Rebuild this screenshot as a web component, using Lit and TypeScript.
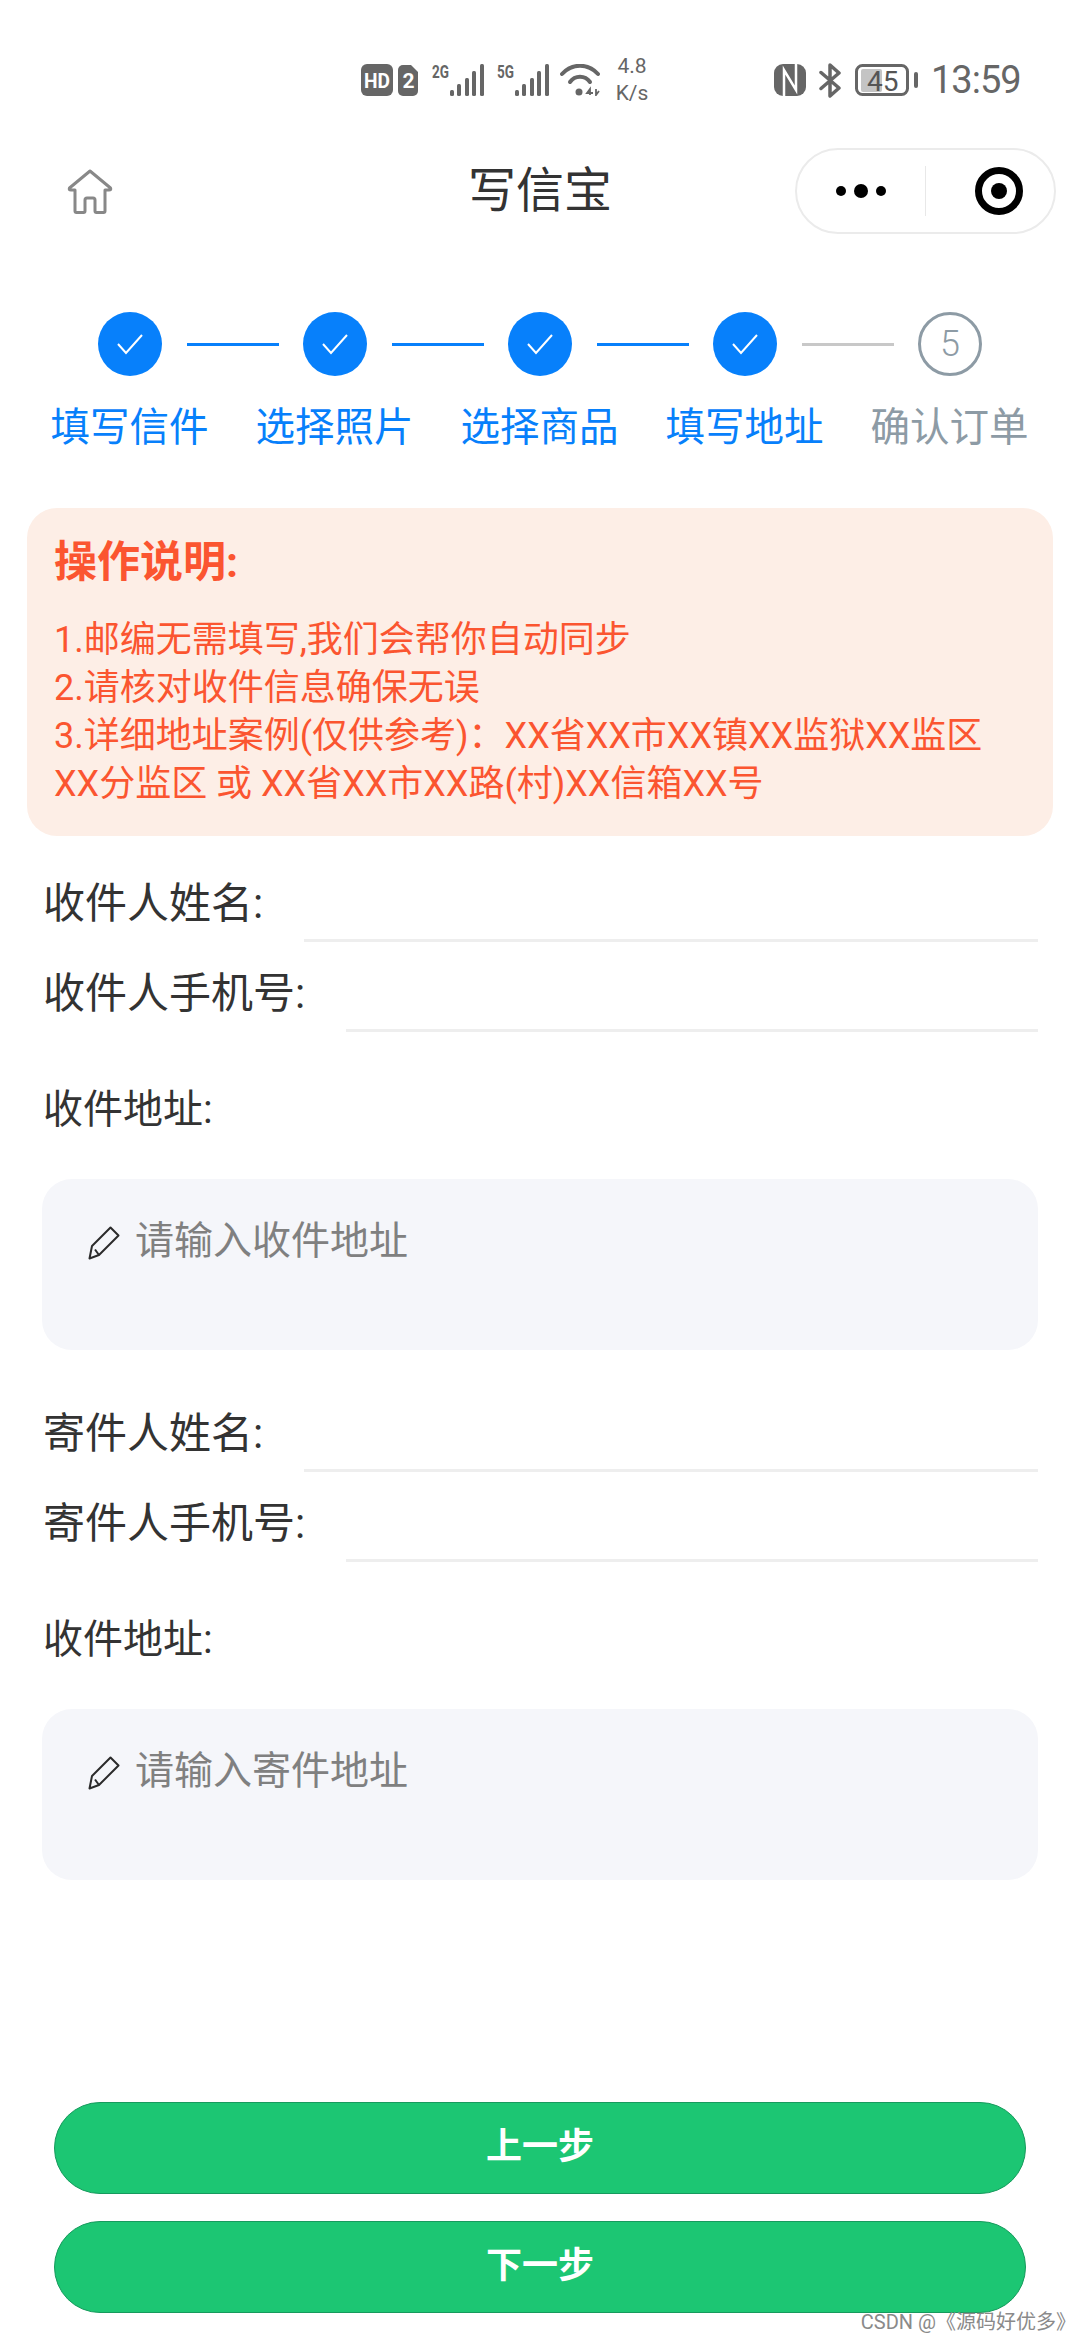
import { LitElement, css, html, svg } from 'lit';
import { customElement } from 'lit/decorators.js';

const stepLabels = ['填写信件', '选择照片', '选择商品', '填写地址', '确认订单'];

const noticeLines = [
  '1.邮编无需填写,我们会帮你自动同步',
  '2.请核对收件信息确保无误',
  '3.详细地址案例(仅供参考)：XX省XX市XX镇XX监狱XX监区',
  'XX分监区 或 XX省XX市XX路(村)XX信箱XX号'
];

const signalIcon = (label: string) => html`
  <svg class="signal" width="53" height="32" viewBox="0 0 53 32">
    <text x="0" y="14" class="sig-text" textLength="17" lengthAdjust="spacingAndGlyphs">${label}</text>
    ${[
      [20, 6],
      [27, 12],
      [35, 18],
      [42, 25],
      [50, 32]
    ].map(([x, h]) => svg`<rect x=${x - 2} y=${32 - h} width="4" height=${h} rx="1.500" fill="#666"></rect>`)}
  </svg>
`;

const pencilIcon = html`
  <svg class="pencil" width="32" height="34" viewBox="0 0 32 34" fill="none" stroke="#2b2b2b" stroke-width="2">
    <path d="M22.500 1.500 L30.500 9.500 L11 29 L1.500 32.500 L4 20 Z" stroke-linejoin="round"></path>
    <path d="M7 23.500 L11 29"></path>
  </svg>
`;

@customElement('app-root')
export class AppRoot extends LitElement {
  public static override styles = css`
    :host {
      display: block;
      font-family: Roboto, 'Noto Sans CJK SC', sans-serif;
    }

    .page {
      position: relative;
      display: flex;
      flex-direction: column;
      height: 2340px;
      background: #fff;
      color: #333;
      overflow: hidden;
    }

    .status {
      display: flex;
      align-items: center;
      height: 148px;
      box-sizing: border-box;
      padding: 12px 0 0 361px;
      color: #666;
    }

    .status svg {
      display: block;
      flex: none;
    }

    .sig-text {
      font: 700 18px Roboto, sans-serif;
      fill: #666;
    }

    .badge-text {
      font: 700 21px Roboto, sans-serif;
      fill: #fff;
    }

    .signal {
      margin-right: 12px;
    }

    .speed {
      width: 36px;
      margin-left: 14px;
      font-size: 21px;
      line-height: 27px;
      text-align: center;
    }

    .time {
      margin-left: 13px;
      font-size: 38px;
      letter-spacing: -1px;
    }

    .nav {
      display: grid;
      grid-template-columns: minmax(0, 1fr) auto minmax(0, 1fr);
      align-items: center;
      height: 86px;
      padding: 0 24px;
    }

    .home {
      display: block;
      margin-left: 43px;
    }

    .title {
      font-size: 48px;
      line-height: 86px;
    }

    .capsule {
      justify-self: end;
      display: flex;
      align-items: center;
      box-sizing: border-box;
      width: 261px;
      height: 86px;
      border: 2px solid #ebebeb;
      border-radius: 43px;
      padding-left: 39px;
    }

    .dots {
      display: flex;
      align-items: center;
      gap: 8px;
    }

    .dots i {
      display: block;
      width: 10px;
      height: 10px;
      border-radius: 50%;
      background: #000;
    }

    .dots i:nth-child(2) {
      width: 14px;
      height: 14px;
    }

    .divider {
      width: 1px;
      height: 50px;
      margin-left: 39px;
      background: #e8e8e8;
    }

    .record {
      display: flex;
      align-items: center;
      justify-content: center;
      box-sizing: border-box;
      width: 48px;
      height: 48px;
      margin-left: 49px;
      border: 7px solid #000;
      border-radius: 50%;
    }

    .record i {
      display: block;
      width: 16px;
      height: 16px;
      border-radius: 50%;
      background: #000;
    }

    .track {
      display: flex;
      align-items: center;
      margin-top: 78px;
      padding-left: 98px;
    }

    .dot {
      flex: none;
      display: flex;
      align-items: center;
      justify-content: center;
      box-sizing: border-box;
      width: 64px;
      height: 64px;
      border-radius: 50%;
      background: #0780fb;
    }

    .dot.todo {
      border: 3px solid #8d9ba5;
      background: #fff;
      color: #8d9ba5;
      font-size: 36px;
      font-weight: 300;
    }

    .line {
      flex: none;
      width: 92px;
      height: 3px;
      margin: 0 24px 0 25px;
      background: #0780fb;
    }

    .line.todo {
      background: #c8c8c8;
    }

    .labels {
      display: grid;
      grid-template-columns: repeat(5, 205px);
      margin-top: 24px;
      padding-left: 27px;
      font-size: 39.5px;
      line-height: 56px;
      text-align: center;
      color: #0780fb;
    }

    .labels .todo {
      color: #8d9ba5;
    }

    .notice {
      box-sizing: border-box;
      height: 328px;
      margin: 52px 27px 0;
      padding: 27px 27px 0;
      border-radius: 30px;
      background: #fdeee6;
      color: #fb5530;
    }

    .notice h2 {
      margin: 0;
      font-size: 43px;
      line-height: 54px;
      font-weight: 700;
    }

    .notice p {
      margin: 27px 0 0;
      font-size: 36px;
      line-height: 48px;
      white-space: nowrap;
    }

    .form {
      padding: 0 42px;
    }

    .field {
      display: flex;
      height: 67px;
      padding-left: 1px;
      font-size: 42px;
      line-height: 58px;
      white-space: nowrap;
    }

    .field.top {
      margin-top: 39px;
    }

    .field.top.later {
      margin-top: 55px;
    }

    .field.second {
      margin-top: 23px;
    }

    .field span {
      padding-right: 41px;
    }

    .field .input {
      flex: 1;
      border-bottom: 3px solid #eee;
    }

    .area-label {
      margin-top: 49px;
      padding-left: 1px;
      font-size: 40px;
      line-height: 58px;
    }

    .area {
      display: flex;
      align-items: flex-start;
      box-sizing: border-box;
      height: 171px;
      margin-top: 40px;
      padding: 34px 0 0 46px;
      border-radius: 30px;
      background: #f5f6fa;
      color: #808080;
      font-size: 39px;
      line-height: 56px;
    }

    .pencil {
      flex: none;
      margin: 13px 15px 0 0;
    }

    .actions {
      display: flex;
      flex-direction: column;
      gap: 27px;
      margin-top: auto;
      padding: 0 54px 27px;
    }

    .btn {
      box-sizing: border-box;
      height: 92px;
      border: 1px solid #179a5d;
      border-radius: 46px;
      background: #1cc673;
      color: #fff;
      font-size: 36px;
      font-weight: 700;
      line-height: 88px;
      text-align: center;
    }

    .mark {
      position: absolute;
      right: 4px;
      bottom: 5px;
      font-size: 20px;
      line-height: 26px;
      color: #8a8a8a;
    }
  `;

  private renderStatus() {
    return html`
      <div class="status">
        <svg width="57" height="32" viewBox="0 0 57 32" style="margin-right:14px">
          <rect width="32" height="32" rx="6" fill="#666"></rect>
          <text x="3" y="23.500" class="badge-text" textLength="26" lengthAdjust="spacingAndGlyphs">HD</text>
          <path d="M37 6 a5 5 0 0 1 5 -5 H50 l7 7 V27 a5 5 0 0 1 -5 5 H42 a5 5 0 0 1 -5 -5 Z" fill="#666"></path>
          <text x="41.500" y="24" class="badge-text">2</text>
        </svg>
        ${signalIcon('2G')} ${signalIcon('5G')}
        <svg width="40" height="32" viewBox="0 0 40 32" fill="none" stroke="#666" stroke-width="4" stroke-linecap="round" style="margin-left:-2px">
          <path d="M2 10 C12 -1 28 -1 38 10"></path>
          <path d="M10 18 C15 11 25 11 30 18"></path>
          <circle cx="19" cy="28" r="3.500" fill="#666" stroke="none"></circle>
          <path d="M30 31 V25 L27 29 H33 M36 25 V31 L39 27" stroke-width="1.800" stroke-linecap="butt"></path>
        </svg>
        <div class="speed">4.8<br />K/s</div>
        <svg width="32" height="32" viewBox="0 0 32 32" style="margin-left:124px">
          <rect width="32" height="32" rx="9" fill="#666"></rect>
          <path d="M10 32 V6 L22 26 V0" fill="none" stroke="#fff" stroke-width="2.500"></path>
        </svg>
        <svg width="22" height="35" viewBox="0 0 22 35" fill="none" stroke="#666" stroke-width="3.500" stroke-linecap="round" stroke-linejoin="round" style="margin-left:13px">
          <path d="M2 9.500 L20 25 L11 33 V2 L20 10 L2 25.500"></path>
        </svg>
        <svg width="63" height="32" viewBox="0 0 63 32" style="margin-left:14px">
          <rect x="1.500" y="1.500" width="51" height="29" rx="6" fill="none" stroke="#666" stroke-width="3"></rect>
          <rect x="6" y="5" width="21" height="23" rx="2" fill="#c4c4c4"></rect>
          <text x="12" y="27" style="font:28px Roboto,sans-serif;fill:#555">45</text>
          <rect x="59" y="8" width="4" height="16" rx="2" fill="#666"></rect>
        </svg>
        <div class="time">13:59</div>
      </div>
    `;
  }

  private renderNav() {
    return html`
      <div class="nav">
        <svg class="home" width="46" height="45" viewBox="0 0 46 45" fill="none" stroke="#888" stroke-width="3" stroke-linejoin="round">
          <path d="M23 2 L43.500 19 Q44.500 21 42 21 H38 V42 Q38 43.500 36.500 43.500 H29.500 Q28 43.500 28 42 V31 Q28 29 26 29 H20 Q18 29 18 31 V42 Q18 43.500 16.500 43.500 H9.500 Q8 43.500 8 42 V21 H4 Q1.500 21 2.500 19 Z"></path>
        </svg>
        <div class="title">写信宝</div>
        <div class="capsule">
          <div class="dots"><i></i><i></i><i></i></div>
          <div class="divider"></div>
          <div class="record"><i></i></div>
        </div>
      </div>
    `;
  }

  private renderSteps() {
    return html`
      <div class="track">
        ${stepLabels.map((_, index) =>
          index < 4
            ? html`
                <div class="dot">
                  <svg width="28" height="22" viewBox="0 0 28 22" fill="none" stroke="#fff" stroke-width="2">
                    <path d="M2 11 L10 20 L26 2"></path>
                  </svg>
                </div>
                <div class="line ${index === 3 ? 'todo' : ''}"></div>
              `
            : html`<div class="dot todo">5</div>`
        )}
      </div>
      <div class="labels">
        ${stepLabels.map((label, index) => html`<div class=${index === 4 ? 'todo' : ''}>${label}</div>`)}
      </div>
    `;
  }

  private renderContact(prefix: string, placeholder: string, later: boolean) {
    return html`
      <div class="field top ${later ? 'later' : ''}">
        <span>${prefix}人姓名:</span>
        <div class="input"></div>
      </div>
      <div class="field second">
        <span>${prefix}人手机号:</span>
        <div class="input"></div>
      </div>
      <div class="area-label">收件地址:</div>
      <div class="area">${pencilIcon}<span>${placeholder}</span></div>
    `;
  }

  public override render() {
    return html`
      <div class="page">
        ${this.renderStatus()} ${this.renderNav()} ${this.renderSteps()}
        <div class="notice">
          <h2>操作说明:</h2>
          <p>${noticeLines.map((line) => html`${line}<br />`)}</p>
        </div>
        <div class="form">
          ${this.renderContact('收件', '请输入收件地址', false)} ${this.renderContact('寄件', '请输入寄件地址', true)}
        </div>
        <div class="actions">
          <div class="btn">上一步</div>
          <div class="btn">下一步</div>
        </div>
        <div class="mark">CSDN @《源码好优多》</div>
      </div>
    `;
  }
}
